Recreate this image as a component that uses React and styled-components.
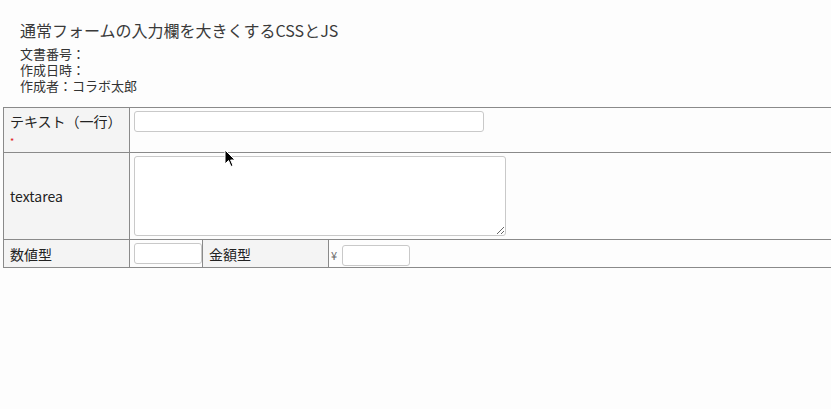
import React from 'react';
import styled, { createGlobalStyle } from 'styled-components';

const GlobalStyle = createGlobalStyle`
  html, body {
    margin: 0;
    padding: 0;
    background: #fdfdfd;
    overflow: hidden;
  }
  body {
    font-family: "Noto Sans CJK JP", "Noto Sans", sans-serif;
    color: #333;
  }
`;

const Page = styled.div`
  position: relative;
  width: 831px;
  height: 409px;
  overflow: hidden;
`;

const Header = styled.header`
  padding: 20px 0 0 20px;
`;

const Title = styled.h1`
  margin: 0;
  font-size: 16px;
  font-weight: 400;
  line-height: 20px;
  color: #3a3a3a;
`;

const Meta = styled.div`
  margin-top: 6px;
  font-size: 13px;
  line-height: 16px;
  color: #333;
`;

const MetaLine = styled.div`
  height: 16px;
`;

const FormTable = styled.table`
  margin: 13px 0 0 3px;
  width: 832px;
  border-collapse: collapse;
  table-layout: fixed;
  font-size: 14px;
  color: #222;
`;

const Label = styled.th`
  padding: ${({ $top }) => ($top ? '3px 6px 0' : '0 6px')};
  border: 1px solid #8a8a8a;
  background: #f4f4f4;
  font-weight: 400;
  text-align: left;
  vertical-align: ${({ $top }) => ($top ? 'top' : 'middle')};
  line-height: 20px;
`;

const Value = styled.td`
  padding: 3px 0 0 ${({ $pad }) => ($pad ?? 4)}px;
  border: 1px solid #8a8a8a;
  background: #fdfdfd;
  vertical-align: top;
  height: ${({ $h }) => $h}px;
  white-space: nowrap;
`;

const Required = styled.div`
  color: #e02020;
  font-size: 9px;
  line-height: 10px;
  margin-top: 6px;
`;

const TextInput = styled.input`
  box-sizing: border-box;
  display: ${({ $inline }) => ($inline ? 'inline-block' : 'block')};
  width: ${({ $w }) => $w}px;
  height: 21px;
  margin: 0;
  border: 1px solid #c9c9c9;
  border-radius: 3px;
  background: #fff;
  font: inherit;
  vertical-align: middle;
`;

const TextArea = styled.textarea`
  box-sizing: border-box;
  display: block;
  width: 372px;
  height: 80px;
  margin: 0 0 3px;
  border: 1px solid #c9c9c9;
  border-radius: 3px;
  background: #fff;
  font: inherit;
`;

const Yen = styled.span`
  display: inline-block;
  width: 11px;
  font-size: 11px;
  color: #666;
  vertical-align: middle;
`;

const Cursor = styled.svg`
  position: absolute;
  left: 224px;
  top: 149px;
`;

export default function App() {
  return (
    <Page>
      <GlobalStyle />
      <Header>
        <Title>通常フォームの入力欄を大きくするCSSとJS</Title>
        <Meta>
          <MetaLine>文書番号：</MetaLine>
          <MetaLine>作成日時：</MetaLine>
          <MetaLine>作成者：コラボ太郎</MetaLine>
        </Meta>
      </Header>
      <FormTable>
        <colgroup>
          <col style={{ width: 126 }} />
          <col style={{ width: 73 }} />
          <col style={{ width: 126 }} />
          <col />
        </colgroup>
        <tbody>
          <tr>
            <Label $top>
              テキスト（一行）
              <Required>*</Required>
            </Label>
            <Value colSpan={3} $h={41}>
              <TextInput $w={350} />
            </Value>
          </tr>
          <tr>
            <Label>textarea</Label>
            <Value colSpan={3} $h={83}>
              <TextArea />
            </Value>
          </tr>
          <tr>
            <Label>数値型</Label>
            <Value $h={24}>
              <TextInput $w={68} />
            </Value>
            <Label>金額型</Label>
            <Value $h={24} $pad={2}>
              <Yen>¥</Yen>
              <TextInput $inline $w={68} />
            </Value>
          </tr>
        </tbody>
      </FormTable>
      <Cursor width="12" height="19" viewBox="0 0 12 19">
        <path
          d="M1 1 L1 15 L4.5 11.5 L7 17.5 L9 16.6 L6.6 11 L11 11 Z"
          fill="#000"
          stroke="#fff"
          strokeWidth="1"
          strokeLinejoin="round"
        />
      </Cursor>
    </Page>
  );
}
